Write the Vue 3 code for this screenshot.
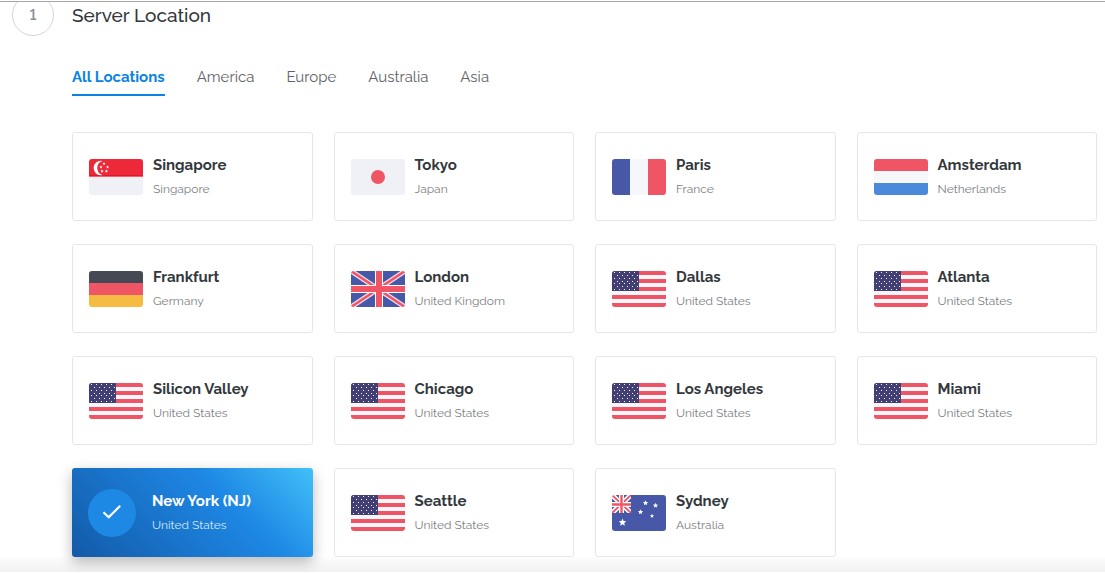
<script setup>
import { ref } from 'vue'

const tabs = ['All Locations', 'America', 'Europe', 'Australia', 'Asia']
const activeTab = ref('All Locations')
const selected = ref('New York (NJ)')

const locations = [
  { city: 'Singapore', country: 'Singapore', flag: 'sg' },
  { city: 'Tokyo', country: 'Japan', flag: 'jp' },
  { city: 'Paris', country: 'France', flag: 'fr' },
  { city: 'Amsterdam', country: 'Netherlands', flag: 'nl' },
  { city: 'Frankfurt', country: 'Germany', flag: 'de' },
  { city: 'London', country: 'United Kingdom', flag: 'gb' },
  { city: 'Dallas', country: 'United States', flag: 'us' },
  { city: 'Atlanta', country: 'United States', flag: 'us' },
  { city: 'Silicon Valley', country: 'United States', flag: 'us' },
  { city: 'Chicago', country: 'United States', flag: 'us' },
  { city: 'Los Angeles', country: 'United States', flag: 'us' },
  { city: 'Miami', country: 'United States', flag: 'us' },
  { city: 'New York (NJ)', country: 'United States', flag: 'us' },
  { city: 'Seattle', country: 'United States', flag: 'us' },
  { city: 'Sydney', country: 'Australia', flag: 'au' }
]

const cantonStars = []
for (let row = 0; row < 7; row++) {
  for (let col = 0; col < 5; col++) {
    const x = 2 + col * 5 + (row % 2 ? 3 : 0)
    cantonStars.push({ x: Math.min(x, 25), y: 1 + row * 3 - (row > 3 ? 1 : 0) })
  }
}

function star(cx, cy, r) {
  const points = []
  for (let i = 0; i < 10; i++) {
    const radius = i % 2 ? r * 0.45 : r
    const angle = (Math.PI / 5) * i - Math.PI / 2
    points.push(`${cx + radius * Math.cos(angle)},${cy + radius * Math.sin(angle)}`)
  }
  return points.join(' ')
}
const singaporeStars = [[15, 4.6], [12, 8], [18.6, 8], [13, 12.2], [17.4, 12.2]]
const southernCross = [[33.5, 8, 2.8], [43.5, 10.5, 2.8], [28.5, 17, 2.8], [40, 21, 2.2], [10.5, 27.5, 4]]
</script>

<template>
  <section class="step">
    <header class="head">
      <span class="num">1</span>
      <h2>Server Location</h2>
    </header>
    <div class="body">
      <nav class="tabs" aria-label="Regions">
        <button
          v-for="tab in tabs"
          :key="tab"
          type="button"
          class="tab"
          :class="{ active: tab === activeTab }"
          @click="activeTab = tab"
        >{{ tab }}</button>
      </nav>
      <div class="grid" role="radiogroup" aria-label="Server Location">
        <label
          v-for="loc in locations"
          :key="loc.city"
          class="card"
          :class="{ selected: loc.city === selected }"
        >
          <input v-model="selected" class="radio" type="radio" name="location" :value="loc.city" />
          <span v-if="loc.city === selected" class="check">
            <svg width="20" height="18" viewBox="0 0 20 18" aria-hidden="true">
              <path d="M1.5 8.3 6.7 13.2 18.2 1.8" fill="none" stroke="#fff" stroke-width="2.2" />
            </svg>
          </span>
          <svg v-else class="flag" viewBox="0 0 54 36" aria-hidden="true">
            <g v-if="loc.flag === 'sg'">
              <path d="M0 0H54V18H0z" fill="#ed2939" />
              <path d="M0 16H54V17H0z" fill="#e0162b" />
              <path d="M0 17H54V18H0z" fill="#f4616c" />
              <path d="M0 18H54V36H0z" fill="#f0f1f6" />
              <path d="M13.5 2A7.2 7.2 0 1 0 13.5 16A7.3 7.3 0 0 1 13.5 2z" fill="#fff" />
              <polygon v-for="(s, i) in singaporeStars" :key="i" :points="star(s[0], s[1], 1.7)" fill="#fff" />
            </g>
            <g v-else-if="loc.flag === 'jp'">
              <path d="M0 0H54V36H0z" fill="#f0f1f6" />
              <circle cx="27" cy="18" r="7" fill="#ef5565" />
            </g>
            <g v-else-if="loc.flag === 'fr'">
              <path d="M0 0H18V36H0z" fill="#4758a9" />
              <path d="M18 0H36V36H18z" fill="#f5f7fb" />
              <path d="M36 0H54V36H36z" fill="#ef5565" />
            </g>
            <g v-else-if="loc.flag === 'nl'">
              <path d="M0 0H54V12H0z" fill="#ef5565" />
              <path d="M0 12H54V24H0z" fill="#f5f7fb" />
              <path d="M0 24H54V36H0z" fill="#4a89dc" />
            </g>
            <g v-else-if="loc.flag === 'de'">
              <path d="M0 0H54V12H0z" fill="#434a54" />
              <path d="M0 12H54V24H0z" fill="#ef5565" />
              <path d="M0 24H54V36H0z" fill="#f6bb42" />
            </g>
            <g v-else-if="loc.flag === 'gb'">
              <path d="M0 0H54V36H0z" fill="#4758a9" />
              <path d="M0 0 54 36M54 0 0 36" stroke="#f0e3ec" stroke-width="5" />
              <path d="M0 0 54 36M54 0 0 36" stroke="#ef5565" stroke-width="2.6" />
              <path d="M28 0V36M0 18H54" stroke="#fff" stroke-width="8" />
              <path d="M28 0V36M0 18H54" stroke="#ef5565" stroke-width="6" />
            </g>
            <g v-else-if="loc.flag === 'us'">
              <path d="M0 0H54V36H0z" fill="#f5f7fb" />
              <path d="M0 2H54M0 10H54M0 18H54M0 26H54M0 34H54" stroke="#ef5565" stroke-width="4" />
              <path d="M0 0H27V20H0z" fill="#413f73" />
              <rect v-for="(s, i) in cantonStars" :key="i" :x="s.x" :y="s.y" width="1" height="1" fill="#f3f3fa" />
            </g>
            <g v-else>
              <path d="M0 0H54V36H0z" fill="#4758a9" />
              <path d="M0 0 19 18M19 0 0 18" stroke="#fff" stroke-width="5" />
              <path d="M0 0 19 18M19 0 0 18" stroke="#ef5565" stroke-width="1.8" />
              <path d="M9.5 0V18M0 9.5H19" stroke="#fff" stroke-width="5" />
              <path d="M9.5 0V18M0 9.5H19" stroke="#ef5565" stroke-width="2.4" />
              <path d="M19 0H25V24H0V18H19z" fill="#4758a9" />
              <polygon v-for="(s, i) in southernCross" :key="i" :points="star(s[0], s[1], s[2])" fill="#fff" />
            </g>
          </svg>
          <span class="text">
            <span class="city">{{ loc.city }}</span>
            <span class="country">{{ loc.country }}</span>
          </span>
        </label>
      </div>
    </div>
    <div class="fade"></div>
  </section>
</template>

<style>
body {
  margin: 0;
  background: #fff;
}
</style>

<style scoped>
.step {
  margin-top: 1px;
  border-top: 1px solid #a6a8a8;
  overflow: hidden;
  font-family: Raleway, Lato, "Open Sans", sans-serif;
  color: #33383d;
}
.head {
  display: flex;
  align-items: center;
  gap: 18px;
  margin: -8px 0 0 12px;
}
.num {
  box-sizing: border-box;
  width: 42px;
  height: 42px;
  border: 1px solid #d3d7da;
  border-radius: 50%;
  text-align: center;
  line-height: 40px;
  font-size: 15px;
  font-weight: 600;
  font-variant-numeric: lining-nums;
  color: #8b9095;
}
h2 {
  margin: 0;
  font-size: 19px;
  line-height: 24px;
  font-weight: 500;
}
.body {
  padding: 29px 8px 0 72px;
}
.tabs {
  display: flex;
  gap: 32px;
}
.tab {
  padding: 0 0 5px;
  border: 0;
  border-bottom: 2px solid transparent;
  background: none;
  font: inherit;
  font-size: 15px;
  line-height: 24px;
  color: #5f6367;
  cursor: pointer;
}
.tab.active {
  border-color: #0a84e4;
  color: #0a84e4;
  font-weight: 700;
}
.grid {
  display: grid;
  grid-template-columns: repeat(4, 1fr);
  gap: 23px 21px;
  margin-top: 36px;
}
.card {
  position: relative;
  box-sizing: border-box;
  display: flex;
  align-items: center;
  gap: 10px;
  height: 89px;
  padding: 0 16px;
  border: 1px solid #e4e7ea;
  border-radius: 3px;
  background: #fff;
  cursor: pointer;
}
.card.selected {
  gap: 16px;
  border: 0;
  background: linear-gradient(45deg, #135aa8 0%, #1e88e5 65%, #42c0f8 100%);
  box-shadow: 0 5px 14px rgba(0, 0, 0, 0.28);
  color: #fff;
}
.radio {
  position: absolute;
  opacity: 0;
  margin: 0;
}
.flag {
  flex: none;
  width: 54px;
  height: 36px;
  border-radius: 3px;
}
.check {
  display: flex;
  align-items: center;
  justify-content: center;
  width: 48px;
  height: 48px;
  border-radius: 50%;
  background: #1e88e5;
}
.text {
  display: flex;
  flex-direction: column;
  line-height: 24px;
}
.city {
  font-size: 15px;
  font-weight: 700;
}
.country {
  font-size: 12px;
  color: #7d8083;
}
.selected .country {
  color: #d4e7f9;
}
.fade {
  height: 15px;
  background: linear-gradient(#fdfdfd, #f1f1f1);
}
</style>
